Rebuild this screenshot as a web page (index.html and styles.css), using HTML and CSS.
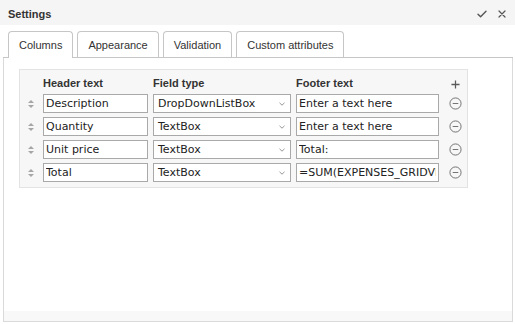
FILE: index.html
```html
<!doctype html>
<html>
  <head>
    <title>Settings</title>
    <link rel="stylesheet" href="styles.css">
  </head>
  <body>
    <div class="dialog">
      <div class="titlebar">
        <span class="title">Settings</span>
        <div class="actions">
          <svg class="icon" viewBox="0 0 10 10" fill="none" stroke="currentColor" stroke-width="1.4">
            <path d="M1 5.2l2.6 2.6L9 2.2" stroke-linecap="round" stroke-linejoin="round" />
          </svg>
          <svg class="icon" viewBox="0 0 10 10" fill="none" stroke="currentColor" stroke-width="1.2">
            <path d="M2 2l6 6M8 2l-6 6" stroke-linecap="round" />
          </svg>
        </div>
      </div>

      <div class="tabs">
        <div class="tab active">Columns</div>
        <div class="tab">Appearance</div>
        <div class="tab">Validation</div>
        <div class="tab">Custom attributes</div>
      </div>

      <div class="panel">
        <div class="grid-box">
          <div class="grid">
            <span></span>
            <span class="col-head">Header text</span>
            <span class="col-head">Field type</span>
            <span class="col-head">Footer text</span>
            <span class="cell-action">
              <svg class="plus" viewBox="0 0 10 10" fill="none" stroke="currentColor" stroke-width="1.4">
                <path d="M5 0.5v9M0.5 5h9" />
              </svg>
            </span>

            <span class="handle"><i class="up"></i><i class="down"></i></span>
            <input class="field" type="text" value="Description">
            <div class="select"><span>DropDownListBox</span><svg class="chev" viewBox="0 0 6 4" fill="none" stroke="currentColor" stroke-width="0.9"><path d="M0.5 0.8L3 3.2 5.5 0.8" /></svg></div>
            <input class="field" type="text" value="Enter a text here">
            <span class="cell-action"><svg class="remove" viewBox="0 0 14 14" fill="none" stroke="currentColor" stroke-width="1"><circle cx="7" cy="7" r="6" /><path d="M4 7h6" /></svg></span>

            <span class="handle"><i class="up"></i><i class="down"></i></span>
            <input class="field" type="text" value="Quantity">
            <div class="select"><span>TextBox</span><svg class="chev" viewBox="0 0 6 4" fill="none" stroke="currentColor" stroke-width="0.9"><path d="M0.5 0.8L3 3.2 5.5 0.8" /></svg></div>
            <input class="field" type="text" value="Enter a text here">
            <span class="cell-action"><svg class="remove" viewBox="0 0 14 14" fill="none" stroke="currentColor" stroke-width="1"><circle cx="7" cy="7" r="6" /><path d="M4 7h6" /></svg></span>

            <span class="handle"><i class="up"></i><i class="down"></i></span>
            <input class="field" type="text" value="Unit price">
            <div class="select"><span>TextBox</span><svg class="chev" viewBox="0 0 6 4" fill="none" stroke="currentColor" stroke-width="0.9"><path d="M0.5 0.8L3 3.2 5.5 0.8" /></svg></div>
            <input class="field" type="text" value="Total:">
            <span class="cell-action"><svg class="remove" viewBox="0 0 14 14" fill="none" stroke="currentColor" stroke-width="1"><circle cx="7" cy="7" r="6" /><path d="M4 7h6" /></svg></span>

            <span class="handle"><i class="up"></i><i class="down"></i></span>
            <input class="field" type="text" value="Total">
            <div class="select"><span>TextBox</span><svg class="chev" viewBox="0 0 6 4" fill="none" stroke="currentColor" stroke-width="0.9"><path d="M0.5 0.8L3 3.2 5.5 0.8" /></svg></div>
            <input class="field" type="text" value="=SUM(EXPENSES_GRIDVIEW.Total)">
            <span class="cell-action"><svg class="remove" viewBox="0 0 14 14" fill="none" stroke="currentColor" stroke-width="1"><circle cx="7" cy="7" r="6" /><path d="M4 7h6" /></svg></span>
          </div>
        </div>
      </div>

      <div class="footer"></div>
    </div>
  </body>
</html>
```

FILE: styles.css
```css
:root {
  --text-color: #333333;
  --title-bg: #f5f5f5;
  --tab-border: #c6c6c6;
  --frame-border: #dadada;
  --input-border: #a9a9a9;
  --box-bg: #f7f7f7;
  --box-border: #e3e3e3;
}

body {
  margin: 0;
  font-family: "Liberation Sans", Arial, sans-serif;
  color: var(--text-color);
  background: #ffffff;
}

.dialog {
  width: 515px;
  height: 322px;
  display: flex;
  flex-direction: column;
}

.titlebar {
  height: 25px;
  flex: none;
  background-color: var(--title-bg);
  display: flex;
  align-items: center;
  justify-content: space-between;
  padding: 0 8px 0 8px;
}

.title {
  font-size: 11px;
  font-weight: bold;
  padding-top: 2px;
}

.actions {
  display: flex;
  align-items: center;
  gap: 10px;
  color: #555555;
  padding-top: 3px;
}

.icon {
  width: 10px;
  height: 10px;
}

.tabs {
  flex: none;
  display: flex;
  gap: 4px;
  margin: 0 2px 0 3px;
  padding: 6px 0 0 5px;
  border-bottom: 1px solid var(--tab-border);
}

.tab {
  height: 26px;
  box-sizing: border-box;
  display: flex;
  align-items: center;
  padding: 1px 10px 0 10px;
  font-size: 11px;
  border: 1px solid var(--tab-border);
  border-bottom: none;
  border-radius: 4px 4px 0 0;
  background: #ffffff;
}

.tab.active {
  height: 27px;
  margin-bottom: -1px;
  padding-bottom: 1px;
}

.panel {
  flex: 1;
  margin: 0 2px 0 3px;
  border-left: 1px solid var(--frame-border);
  border-right: 1px solid var(--frame-border);
  padding: 11px 0 0 15px;
}

.grid-box {
  width: 449px;
  box-sizing: border-box;
  background-color: var(--box-bg);
  border: 1px solid var(--box-border);
  padding: 4px 0 5px 0;
}

.grid {
  display: grid;
  grid-template-columns: 18px 105px 138px 143px 23px;
  grid-template-rows: 16px repeat(4, 19px);
  column-gap: 5px;
  row-gap: 4px;
  align-items: center;
}

.col-head {
  font-size: 11px;
  font-weight: bold;
  padding-top: 1px;
}

.cell-action {
  display: flex;
  justify-content: center;
  align-items: center;
  color: #5a5a5a;
}

.plus {
  width: 9px;
  height: 9px;
  margin-top: 4px;
}

.remove {
  width: 13px;
  height: 13px;
  color: #6a6a6a;
}

.handle {
  display: flex;
  flex-direction: column;
  align-items: center;
  gap: 2px;
  padding-left: 4px;
}

.handle i {
  width: 0;
  height: 0;
  border-left: 3px solid transparent;
  border-right: 3px solid transparent;
}

.handle .up {
  border-bottom: 3px solid #a6a6a6;
}

.handle .down {
  border-top: 3px solid #a6a6a6;
}

.field {
  width: 100%;
  height: 19px;
  box-sizing: border-box;
  margin: 0;
  border: 1px solid var(--input-border);
  border-radius: 0;
  padding: 0 2px;
  font-family: "DejaVu Sans", Verdana, sans-serif;
  font-size: 11px;
  color: #222222;
  background: #ffffff;
  outline: none;
}

.select {
  height: 19px;
  box-sizing: border-box;
  border: 1px solid var(--input-border);
  background: #ffffff;
  display: flex;
  align-items: center;
  justify-content: space-between;
  padding: 0 5px 0 4px;
  font-family: "DejaVu Sans", Verdana, sans-serif;
  font-size: 11px;
  color: #222222;
}

.chev {
  width: 6px;
  height: 4px;
  color: #8a8a8a;
}

.footer {
  flex: none;
  height: 10px;
  margin: 0 2px 0 3px;
  background-color: #f8f8f8;
  border: 1px solid var(--frame-border);
  border-top: none;
}
```
